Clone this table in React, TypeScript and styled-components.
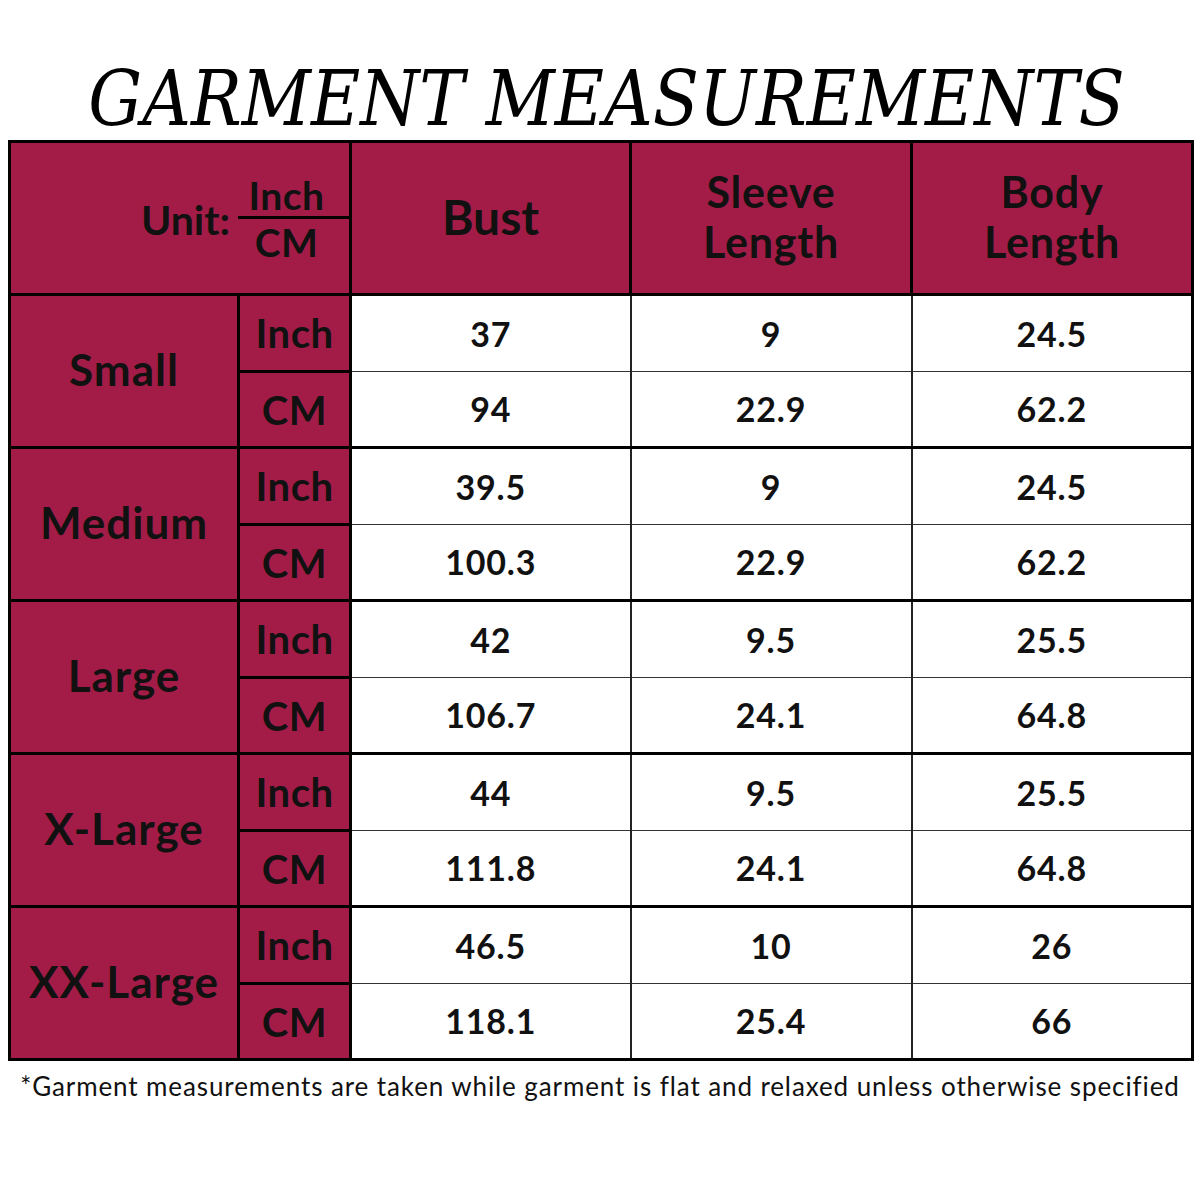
import React from 'react'
import styled, { createGlobalStyle } from 'styled-components'

const GlobalStyle = createGlobalStyle`
  html, body {
    margin: 0;
    padding: 0;
    background: #fff;
  }
  body {
    width: 1200px;
    font-family: Lato, "Open Sans", sans-serif;
    color: #111;
  }
`

const MAROON = '#a31c48'

type Pair = { inch: string; cm: string }
type SizeRow = { name: string; bust: Pair; sleeve: Pair; body: Pair }

const sizes: SizeRow[] = [
  { name: 'Small', bust: { inch: '37', cm: '94' }, sleeve: { inch: '9', cm: '22.9' }, body: { inch: '24.5', cm: '62.2' } },
  { name: 'Medium', bust: { inch: '39.5', cm: '100.3' }, sleeve: { inch: '9', cm: '22.9' }, body: { inch: '24.5', cm: '62.2' } },
  { name: 'Large', bust: { inch: '42', cm: '106.7' }, sleeve: { inch: '9.5', cm: '24.1' }, body: { inch: '25.5', cm: '64.8' } },
  { name: 'X-Large', bust: { inch: '44', cm: '111.8' }, sleeve: { inch: '9.5', cm: '24.1' }, body: { inch: '25.5', cm: '64.8' } },
  { name: 'XX-Large', bust: { inch: '46.5', cm: '118.1' }, sleeve: { inch: '10', cm: '25.4' }, body: { inch: '26', cm: '66' } },
]

export default function App() {
  return (
    <Page>
      <GlobalStyle />
      <Title>
        <TitleText>GARMENT MEASUREMENTS</TitleText>
      </Title>
      <Chart>
        <colgroup>
          <col style={{ width: 229 }} />
          <col style={{ width: 112 }} />
          <col style={{ width: 280 }} />
          <col style={{ width: 281 }} />
          <col style={{ width: 281 }} />
        </colgroup>
        <thead>
          <HeadRow>
            <UnitHead colSpan={2}>
              <UnitBox>
                <UnitLabel>Unit:</UnitLabel>
                <Fraction>
                  <span>Inch</span>
                  <FractionBar />
                  <span>CM</span>
                </Fraction>
              </UnitBox>
            </UnitHead>
            <HeadCell $big>Bust</HeadCell>
            <HeadCell>
              Sleeve
              <br />
              Length
            </HeadCell>
            <HeadCell>
              Body
              <br />
              Length
            </HeadCell>
          </HeadRow>
        </thead>
        <tbody>
          {sizes.map((s) => (
            <React.Fragment key={s.name}>
              <DataRow $h={77}>
                <SizeCell rowSpan={2}>{s.name}</SizeCell>
                <UnitCell>Inch</UnitCell>
                <ValueCell $pos="top">{s.bust.inch}</ValueCell>
                <ValueCell $pos="top">{s.sleeve.inch}</ValueCell>
                <ValueCell $pos="top">{s.body.inch}</ValueCell>
              </DataRow>
              <DataRow $h={76}>
                <UnitCell>CM</UnitCell>
                <ValueCell $pos="bottom">{s.bust.cm}</ValueCell>
                <ValueCell $pos="bottom">{s.sleeve.cm}</ValueCell>
                <ValueCell $pos="bottom">{s.body.cm}</ValueCell>
              </DataRow>
            </React.Fragment>
          ))}
        </tbody>
      </Chart>
      <Note>
        *Garment measurements are taken while garment is flat and relaxed unless otherwise specified
      </Note>
    </Page>
  )
}

const Page = styled.main`
  display: flex;
  flex-direction: column;
  align-items: flex-start;
  width: 1200px;
  height: 1200px;
  padding-left: 8px;
  box-sizing: border-box;
`

const Title = styled.h1`
  align-self: stretch;
  margin: 0 0 3px;
  padding: 61px 0 0 6px;
  height: 76px;
  text-align: center;
  font-family: "DejaVu Serif", "Liberation Serif", serif;
  font-style: italic;
  font-weight: 400;
  font-size: 76px;
  line-height: 1;
  color: #000;
  white-space: nowrap;
`

// the original face is narrower than the installed serif italic
const TitleText = styled.span`
  display: inline-block;
  transform: scaleX(0.888);
  transform-origin: 50% 50%;
`

const Chart = styled.table`
  table-layout: fixed;
  width: 1183px;
  border-collapse: collapse;
  border: 3px solid #000;
`

const HeadRow = styled.tr`
  height: 153px;
`

const DataRow = styled.tr<{ $h: number }>`
  height: ${(p) => p.$h}px;
`

const MaroonCell = styled.td`
  background: ${MAROON};
  border: 3px solid #000;
  padding: 0;
  text-align: center;
  vertical-align: middle;
  font-weight: 700;
  color: #111;
`

const HeadCell = styled(MaroonCell).attrs({ as: 'th' })<{ $big?: boolean }>`
  font-size: ${(p) => (p.$big ? 48 : 43)}px;
  letter-spacing: ${(p) => (p.$big ? 0 : 0.8)}px;
  line-height: 50px;
  padding-bottom: 2px;
`

const UnitHead = styled(MaroonCell).attrs({ as: 'th' })`
  text-align: right;
`

const UnitBox = styled.div`
  display: flex;
  align-items: center;
  justify-content: flex-end;
  gap: 8px;
`

const UnitLabel = styled.span`
  font-size: 41px;
  line-height: 1;
  padding-top: 2px;
`

const Fraction = styled.div`
  width: 111px;
  display: flex;
  flex-direction: column;
  align-items: center;
  font-size: 39px;
  letter-spacing: 0.5px;
  line-height: 40px;

  span {
    padding-right: 14px;
  }
`

const FractionBar = styled.div`
  align-self: stretch;
  height: 3px;
  background: #000;
  margin: 1px 0 3px;
`

const SizeCell = styled(MaroonCell)`
  font-size: 44px;
  letter-spacing: 1px;
  line-height: 1;
  padding-bottom: 4px;
`

const UnitCell = styled(MaroonCell)`
  font-size: 40px;
  letter-spacing: 0.5px;
  line-height: 1;
`

const ValueCell = styled.td<{ $pos: 'top' | 'bottom' }>`
  background: #fff;
  padding: 0;
  text-align: center;
  vertical-align: middle;
  font-size: 34px;
  letter-spacing: 0.8px;
  font-weight: 700;
  line-height: 1;
  color: #111;
  border-left: 2px solid #222;
  border-right: 2px solid #222;
  border-top: ${(p) => (p.$pos === 'top' ? '3px solid #000' : '1px solid #333')};
  border-bottom: ${(p) => (p.$pos === 'bottom' ? '3px solid #000' : '1px solid #333')};
`

const Note = styled.p`
  align-self: stretch;
  margin: 10px 0 0;
  padding-right: 8px;
  text-align: center;
  font-family: Lato, "Open Sans", sans-serif;
  font-size: 26px;
  letter-spacing: 0.9px;
  line-height: 30px;
  color: #111;
  white-space: nowrap;
`
